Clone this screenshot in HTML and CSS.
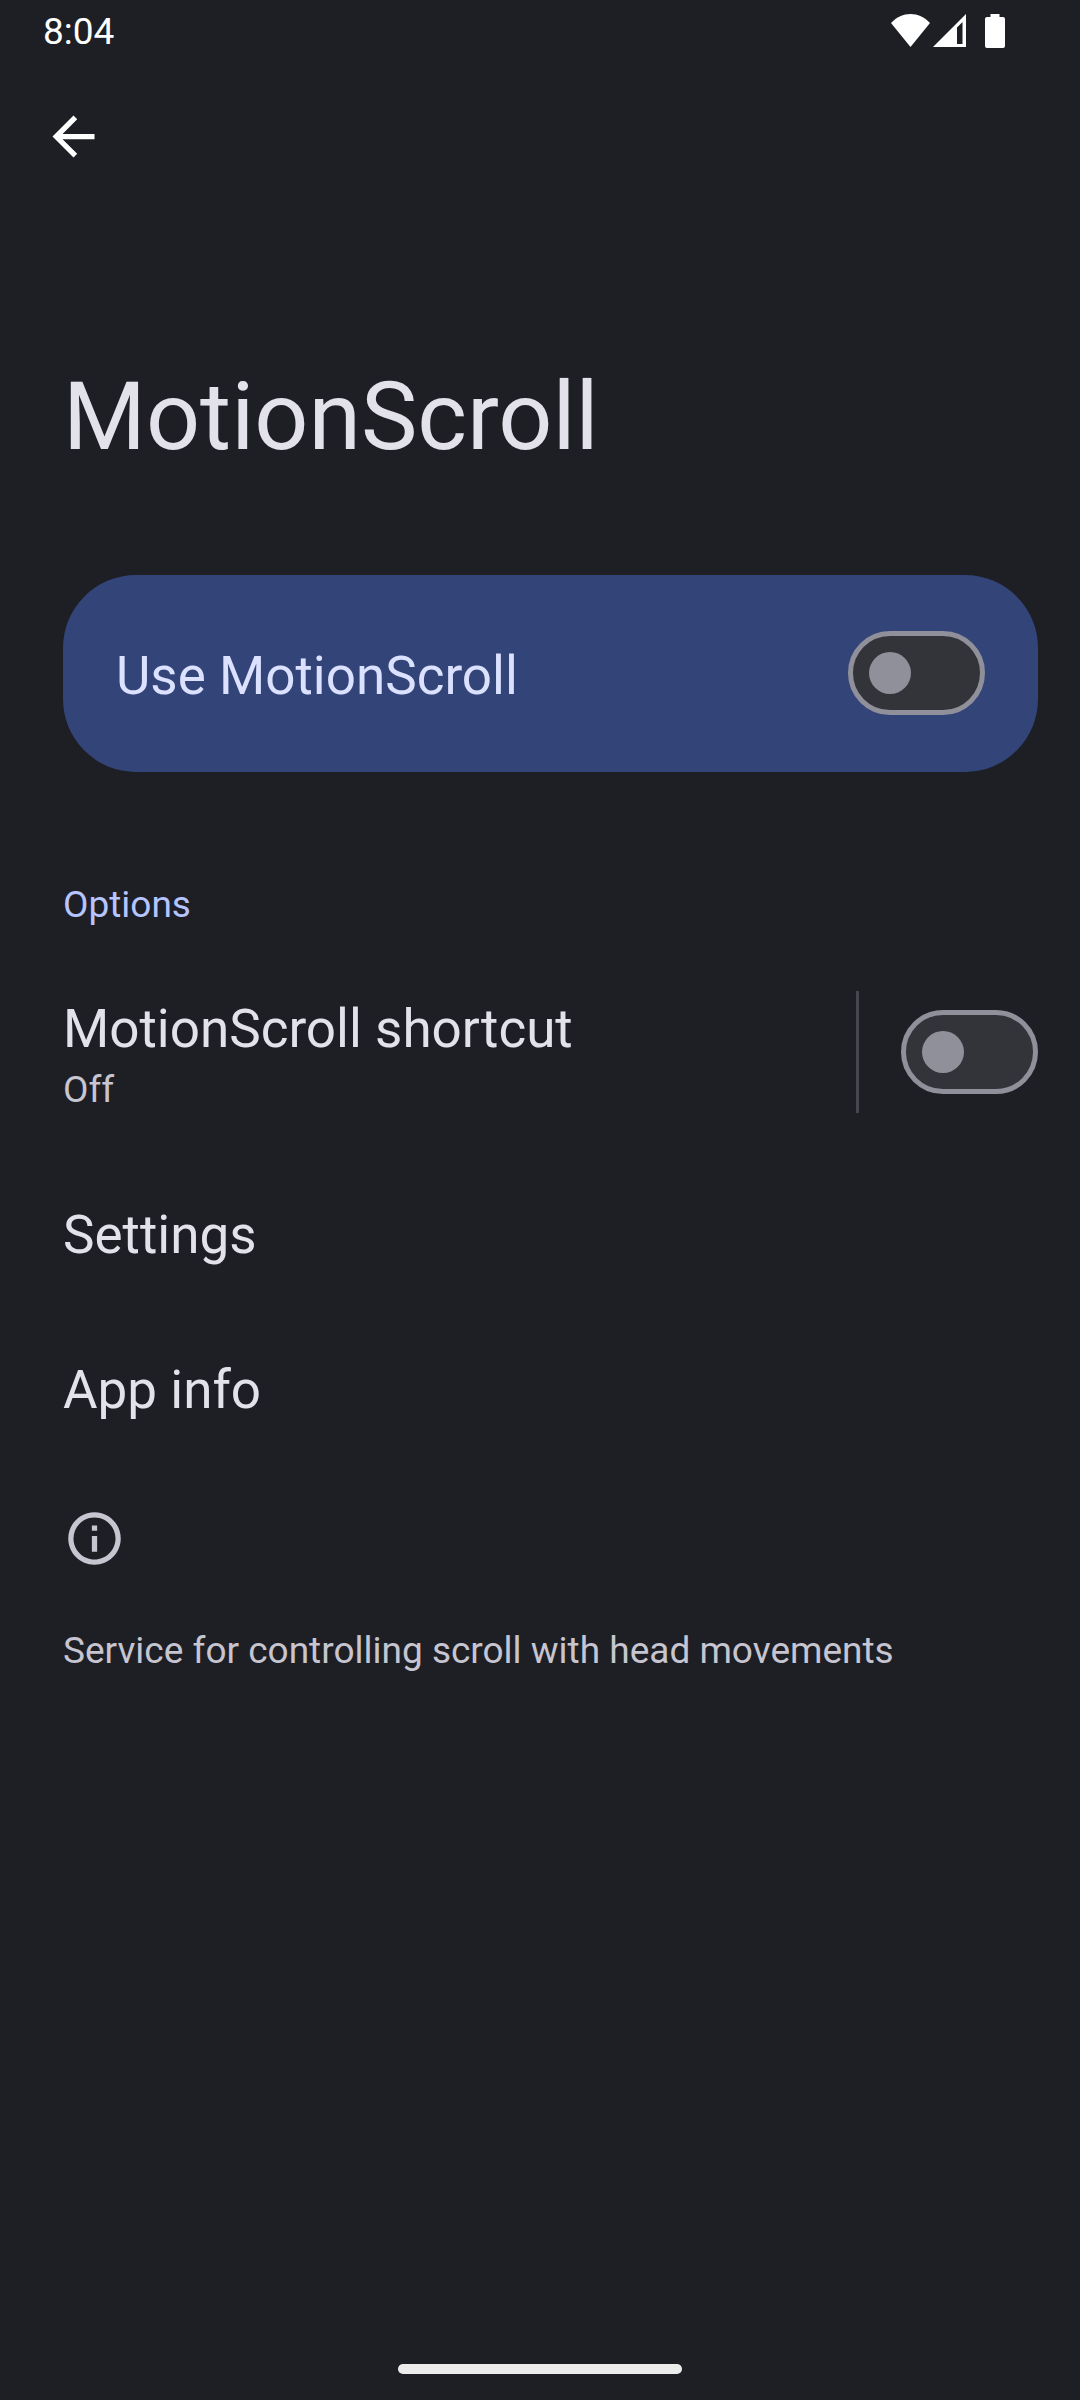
FILE: index.html
```html
<!DOCTYPE html>
<html lang="en">
<head>
  <meta charset="utf-8">
  <meta name="viewport" content="width=device-width, initial-scale=1">
  <title>MotionScroll</title>
  <link rel="stylesheet" href="styles.css">
</head>
<body>
  <div class="screen">
    <div class="status-bar">
      <time class="clock">8:04</time>
      <div class="status-icons">
        <svg class="wifi" viewBox="0 0 39 33" aria-hidden="true"><path d="M0 9C11-3 28-3 39 9L19.500 33Z"/></svg>
        <svg class="signal" viewBox="0 0 33 33" aria-hidden="true"><path fill-rule="evenodd" d="M0 33L33 0V33ZM24 13.500V30H29.500V8Z"/></svg>
        <svg class="battery" viewBox="0 0 20 34" aria-hidden="true"><path d="M5.500 0H14.500V3H18Q20 3 20 5V32Q20 34 18 34H2Q0 34 0 32V5Q0 3 2 3H5.500Z"/></svg>
      </div>
    </div>

    <header>
      <div class="toolbar">
        <button class="back" type="button" aria-label="Navigate up">
          <svg class="icon" viewBox="0 0 24 24" aria-hidden="true"><path d="M20 11H7.830l5.590-5.590L12 4l-8 8 8 8 1.410-1.410L7.830 13H20v-2z"/></svg>
        </button>
      </div>
      <h1 class="title">MotionScroll</h1>
    </header>

    <main class="content">
      <div class="main-switch">
        <label class="main-label" for="use">Use MotionScroll</label>
        <input class="switch" id="use" type="checkbox" role="switch">
      </div>

      <h2 class="category">Options</h2>

      <div class="shortcut">
        <label class="shortcut-text" for="shortcut">
          <span class="item-title">MotionScroll shortcut</span>
          <span class="summary">Off</span>
        </label>
        <div class="shortcut-widget">
          <input class="switch" id="shortcut" type="checkbox" role="switch">
        </div>
      </div>
      <a class="item item-title" href="#settings">Settings</a>
      <a class="item item-title" href="#app-info">App info</a>

      <div class="footer">
        <svg class="icon info" viewBox="0 0 24 24" aria-hidden="true"><path d="M11 7h2v2h-2zm0 4h2v6h-2zm1-9C6.480 2 2 6.480 2 12s4.480 10 10 10 10-4.480 10-10S17.520 2 12 2zm0 18c-4.410 0-8-3.590-8-8s3.590-8 8-8 8 3.590 8 8-3.590 8-8 8z"/></svg>
        <p class="summary">Service for controlling scroll with head movements</p>
      </div>
    </main>

    <div class="nav-bar"><div class="nav-handle"></div></div>
  </div>
</body>
</html>
```
FILE: styles.css
```css
:root {
  --surface: #1e1f25;
  --on-surface: #e3e1e9;
  --on-surface-variant: #c6c5d0;
  --primary: #b6c4ff;
  --outline: #90909a;
}

* {
  box-sizing: border-box;
}

body {
  margin: 0;
  background: var(--surface);
  color: var(--on-surface);
  font-family: Roboto, sans-serif;
}

h1,
h2,
p {
  margin: 0;
  font-weight: 400;
}

svg {
  display: block;
  fill: currentColor;
}

.screen {
  display: flex;
  flex-direction: column;
  min-height: 100vh;
}

.status-bar {
  display: flex;
  justify-content: space-between;
  padding: 10px 75px 9px 43px;
  color: #fff;
}

.clock {
  font-size: 37px;
  line-height: 44px;
}

.status-icons {
  display: flex;
  align-items: flex-start;
  padding-top: 4px;
}

.wifi {
  width: 39px;
  height: 33px;
  margin-right: 3px;
}

.signal {
  width: 33px;
  height: 33px;
  margin-right: 19px;
}

.battery {
  width: 20px;
  height: 34px;
}

.toolbar {
  padding: 42px;
}

.back {
  display: block;
  padding: 0;
  border: 0;
  background: none;
  color: #fff;
}

.icon {
  width: 63px;
  height: 63px;
}

.title {
  padding: 151px 42px 102px 63px;
  font-size: 95px;
  line-height: 112px;
}

.content {
  flex: 1;
  padding: 0 42px 0 63px;
}

.main-switch {
  display: flex;
  align-items: flex-start;
  justify-content: space-between;
  padding: 56px 53px 51px;
  border-radius: 73px;
  background: #324478;
  color: #dbe1ff;
}

.main-label {
  flex: 1;
  font-size: 53px;
  line-height: 90px;
}

.switch {
  appearance: none;
  flex: none;
  display: flex;
  align-items: center;
  width: 137px;
  height: 84px;
  margin: 0;
  padding: 0 16px;
  border: 5px solid var(--outline);
  border-radius: 42px;
  background: #33343a;
}

.switch::before {
  content: "";
  width: 42px;
  height: 42px;
  border-radius: 50%;
  background: var(--outline);
}

.switch:checked {
  justify-content: flex-end;
}

.category {
  padding: 111px 0 20px;
  color: var(--primary);
  font-size: 37px;
  line-height: 44px;
}

.shortcut {
  display: flex;
  padding: 44px 0;
}

.shortcut-text {
  display: flex;
  flex: 1;
  flex-direction: column;
  gap: 8px;
  padding-top: 7px;
}

.shortcut-widget {
  display: flex;
  align-items: center;
  height: 122px;
  padding-left: 42px;
  border-left: 3px solid #46464f;
}

.item-title {
  font-size: 53px;
  line-height: 62px;
}

.summary {
  color: var(--on-surface-variant);
  font-size: 37px;
  line-height: 44px;
}

.item {
  display: block;
  padding: 47px 0 46px;
  color: inherit;
  text-decoration: none;
}

.footer {
  display: flex;
  flex-direction: column;
  gap: 59px;
  padding: 40px 0;
}

.info {
  color: var(--on-surface-variant);
}

.nav-bar {
  display: flex;
  justify-content: center;
  padding: 27px 0 26px;
}

.nav-handle {
  width: 284px;
  height: 10px;
  border-radius: 5px;
  background: #ececec;
}
```
